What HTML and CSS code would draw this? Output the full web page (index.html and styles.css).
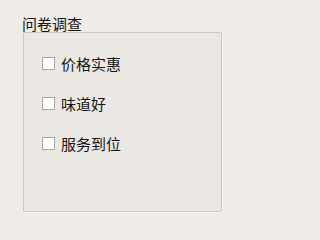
FILE: index.html
```
<!DOCTYPE html>
<html>
<head>
<meta charset="utf-8">
<link rel="stylesheet" href="styles.css">
</head>
<body>
<div class="title">问卷调查</div>
<div class="group">
  <label class="row"><span class="box"></span><span class="label">价格实惠</span></label>
  <label class="row"><span class="box"></span><span class="label">味道好</span></label>
  <label class="row"><span class="box"></span><span class="label">服务到位</span></label>
</div>
</body>
</html>
```
FILE: styles.css
```
html, body {
  margin: 0;
  padding: 0;
  background: #efece8;
  width: 245px;
  height: 218px;
  overflow: hidden;
}
body {
  font-family: "Noto Sans CJK SC", "Noto Sans", sans-serif;
  font-size: 15px;
  color: #141414;
}
.title {
  padding: 16px 0 0 22px;
  line-height: 16px;
  height: 16px;
}
.group {
  margin: 0 0 0 23px;
  width: 197px;
  height: 178px;
  border: 1px solid #cbc8c4;
  border-radius: 2px;
  background: #ebe8e4;
  box-shadow: 1px 1px 0 #f6f4f1;
  padding: 0;
  box-sizing: content-box;
  display: flex;
  flex-direction: column;
  gap: 27px;
  padding-top: 24px;
  height: 154px;
  padding-left: 18px;
  width: 179px;
}
.row {
  display: flex;
  align-items: center;
  height: 13px;
  gap: 6px;
}
.box {
  width: 11px;
  height: 11px;
  border: 1px solid #a9a6a3;
  background: #ffffff;
  flex: none;
}
.label {
  line-height: 15px;
}
```
